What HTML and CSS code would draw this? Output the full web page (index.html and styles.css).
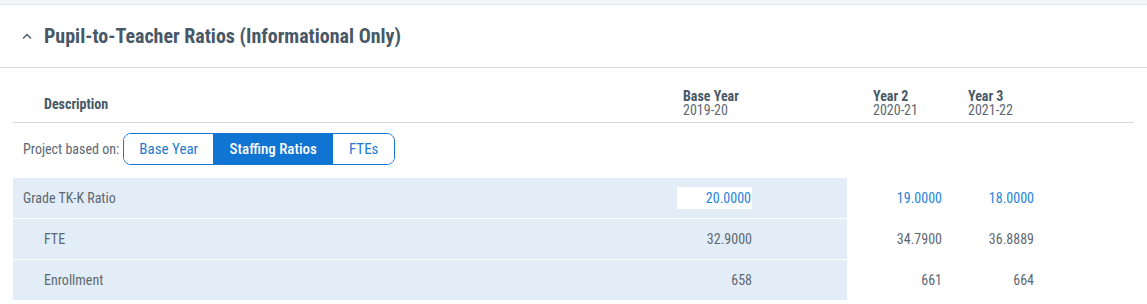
FILE: index.html
```html
<!DOCTYPE html>
<html>
<head>
<meta charset="utf-8">
<link rel="stylesheet" href="styles.css">
</head>
<body>
<div class="topbar"></div>
<div class="panel-header">
  <svg class="chevron" width="10" height="6" viewBox="0 0 10 6"><path d="M1 5.5 L5 1.5 L9 5.5" fill="none" stroke="#4a5a68" stroke-width="1.4"/></svg>
  <h2 class="title">Pupil-to-Teacher Ratios (Informational Only)</h2>
</div>
<div class="table">
  <div class="head-row">
    <div class="main">
      <div class="desc head-desc">Description</div>
      <div class="base head-col"><b>Base Year</b><span>2019-20</span></div>
    </div>
    <div class="y2 head-col"><b>Year 2</b><span>2020-21</span></div>
    <div class="y3 head-col"><b>Year 3</b><span>2021-22</span></div>
  </div>
  <div class="control-row">
    <span class="ctl-label">Project based on:</span>
    <div class="segmented">
      <button class="seg seg-1">Base Year</button>
      <button class="seg seg-2 active">Staffing Ratios</button>
      <button class="seg seg-3">FTEs</button>
    </div>
  </div>
  <div class="row">
    <div class="main">
      <div class="desc">Grade TK-K Ratio</div>
      <div class="base"><span class="input">20.0000</span></div>
    </div>
    <div class="y2 val blue">19.0000</div>
    <div class="y3 val blue">18.0000</div>
  </div>
  <div class="row">
    <div class="main">
      <div class="desc sub">FTE</div>
      <div class="base val">32.9000</div>
    </div>
    <div class="y2 val">34.7900</div>
    <div class="y3 val">36.8889</div>
  </div>
  <div class="row">
    <div class="main">
      <div class="desc sub">Enrollment</div>
      <div class="base val">658</div>
    </div>
    <div class="y2 val">661</div>
    <div class="y3 val">664</div>
  </div>
</div>
</body>
</html>
```
FILE: styles.css
```css
* { box-sizing: border-box; }
body {
  margin: 0;
  background: #fff;
  font-family: "Roboto", "Liberation Sans", sans-serif;
  font-stretch: condensed;
  color: #5d6872;
}
.topbar {
  height: 5px;
  background: #f3f4f6;
  border-bottom: 1px solid #e6e7ea;
}
.panel-header {
  height: 63px;
  display: flex;
  align-items: center;
  padding-left: 22px;
  border-bottom: 1px solid #d9d6e2;
}
.chevron { margin-top: -1px; }
.title {
  margin: 0 0 0 12px;
  font-size: 20px;
  font-weight: 700;
  color: #475866;
}
.table {
  margin: 0 13px;
}
.head-row {
  display: flex;
  align-items: flex-end;
  height: 55px;
  padding-bottom: 5px;
  border-bottom: 1px solid #d9d6e2;
}
.main {
  width: 834px;
  display: flex;
  align-items: center;
  padding-right: 95px;
}
.head-row .main { align-items: flex-end; }
.desc {
  flex: 1;
  padding-left: 10px;
  font-size: 14px;
}
.desc.sub { padding-left: 31px; }
.head-desc {
  padding-left: 31px;
  font-weight: 700;
  color: #475866;
  padding-bottom: 5px;
  line-height: 16px;
}
.base { width: 75px; }
.y2 { margin-left: 26px; width: 69px; }
.y3 { margin-left: 26px; width: 66px; }
.head-col {
  display: flex;
  flex-direction: column;
  color: #475866;
}
.head-col b { font-weight: 700; font-size: 14px; line-height: 13px; }
.head-col span { color: #5d6872; font-size: 14px; line-height: 14px; }
.base.head-col { padding-left: 6px; }
.control-row {
  display: flex;
  align-items: center;
  height: 55px;
  padding: 0 0 3px 10px;
}
.ctl-label {
  font-size: 14px;
  color: #5d6872;
  margin-right: 4px;
}
.segmented {
  display: flex;
  height: 32px;
  border: 1px solid #1875d1;
  border-radius: 8px;
  overflow: hidden;
}
.seg {
  border: 0;
  margin: 0;
  padding: 0;
  background: #fff;
  color: #1e7bd4;
  font-family: inherit;
  font-stretch: condensed;
  font-size: 15px;
  font-weight: 400;
}
.seg-1 { width: 89px; }
.seg-2 { width: 120px; }
.seg-3 { width: 61px; }
.seg.active {
  background: #0f74d2;
  color: #fff;
  font-weight: 500;
}
.row {
  display: flex;
  height: 41px;
  align-items: stretch;
}
.row .main {
  background: #e3edf8;
  border-bottom: 1px solid #fff;
}
.row > .y2, .row > .y3 {
  display: flex;
  align-items: center;
  justify-content: flex-end;
  padding-bottom: 1px;
}
.val {
  font-size: 14px;
  color: #5d6872;
  text-align: right;
}
.blue { color: #1e84dc; }
.input {
  display: block;
  background: #fff;
  height: 22px;
  line-height: 22px;
  text-align: right;
  font-size: 14px;
  color: #1e84dc;
  padding-right: 1px;
}
```
